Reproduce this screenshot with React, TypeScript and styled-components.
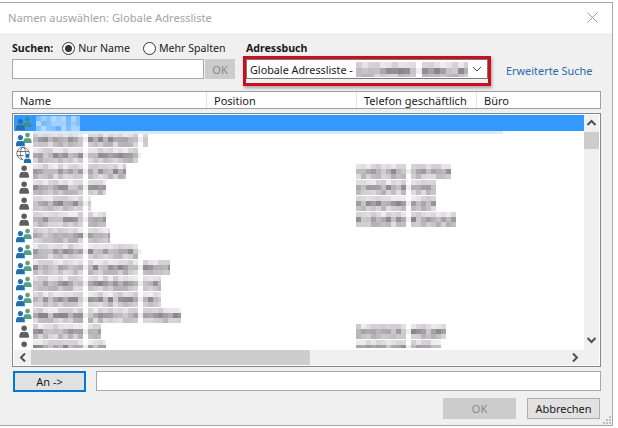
import React from "react";
import styled, { createGlobalStyle } from "styled-components";

const GlobalStyle = createGlobalStyle`
  html, body { margin: 0; padding: 0; background: #fff; }
  body { font-family: "Noto Sans", "Open Sans", sans-serif; font-size: 11px; color: #1a1a1a; overflow: hidden; }
`;

const Dialog = styled.div`
  width: 613px;
  height: 424px;
  margin-top: 2px;
  box-sizing: border-box;
  border-top: 1px solid #a8a8a8;
  border-right: 1px solid #a8a8a8;
  border-bottom: 1px solid #a8a8a8;
  background: #f0f0f0;
  display: flex;
  flex-direction: column;
`;

const TitleBar = styled.div`
  height: 30px;
  flex: none;
  box-sizing: border-box;
  background: #fff;
  padding: 0 14px 2px 8px;
  display: flex;
  align-items: center;
  justify-content: space-between;
  color: #a3a3a3;
  font-size: 11.2px;
`;

const Content = styled.div`
  flex: 1;
  position: relative;
  padding: 7px 11px 0 12px;
  display: flex;
  flex-direction: column;
`;

const SearchGrid = styled.div`
  display: grid;
  grid-template-columns: 231px 1fr;
  column-gap: 0;
  height: 51px;
`;

const OptionRow = styled.div`
  display: flex;
  align-items: center;
  height: 16px;
  margin-bottom: 3px;
`;

const BoldLabel = styled.span`
  font-weight: 700;
  font-size: 10.6px;
`;

const RadioLabel = styled.label<{ $gap: number }>`
  display: inline-flex;
  align-items: center;
  gap: 3px;
  margin-left: ${(p) => p.$gap}px;
  font-size: 10.6px;
`;

const RadioCircle = styled.span<{ $on?: boolean }>`
  width: 13px;
  height: 13px;
  box-sizing: border-box;
  border-radius: 50%;
  border: 1px solid #333;
  background: #fff;
  display: flex;
  align-items: center;
  justify-content: center;
  &::after {
    content: "";
    width: 7px;
    height: 7px;
    border-radius: 50%;
    background: ${(p) => (p.$on ? "#333" : "transparent")};
  }
`;

const SearchRow = styled.div`
  display: flex;
  gap: 1px;
`;

const TextInput = styled.div<{ $w: number }>`
  width: ${(p) => p.$w}px;
  height: 20px;
  box-sizing: border-box;
  background: #fff;
  border: 1px solid #a8a8a8;
`;

const DisabledButton = styled.div<{ $w: number; $h: number }>`
  width: ${(p) => p.$w}px;
  height: ${(p) => p.$h}px;
  background: #cccccc;
  color: #8a8a8a;
  display: flex;
  align-items: center;
  justify-content: center;
  font-size: 11px;
`;

const RightColumn = styled.div`
  padding-left: 3px;
`;

const ComboLine = styled.div`
  display: flex;
  align-items: flex-start;
  margin-top: -3px;
  margin-left: -3px;
`;

const ComboFrame = styled.div`
  width: 248px;
  height: 30px;
  box-sizing: border-box;
  border: 3px solid #c80f22;
  box-shadow: 1px 2px 3px rgba(90, 60, 60, 0.45);
`;

const Combo = styled.div`
  height: 20px;
  box-sizing: border-box;
  background: #fff;
  border: 1px solid #7a7a7a;
  display: flex;
  align-items: center;
  padding: 0 5px 0 3px;
  font-size: 10.8px;
  white-space: nowrap;
`;

const ComboArrow = styled.svg`
  margin-left: auto;
  flex: none;
`;

const AdvancedLink = styled.a`
  margin-left: 15px;
  margin-top: 7px;
  color: #2a6aa8;
  font-size: 10.9px;
  white-space: nowrap;
`;

const HeaderBar = styled.div`
  height: 18px;
  width: 589px;
  flex: none;
  box-sizing: border-box;
  background: #fff;
  border: 1px solid #a0a0a0;
  display: grid;
  grid-template-columns: 194px 150px 120px 1fr;
  font-size: 11px;
`;

const HeaderCell = styled.div`
  padding-left: 7px;
  border-right: 1px solid #e3e3e3;
  display: flex;
  align-items: center;
  &:last-child { border-right: 0; }
`;

const ListFrame = styled.div`
  width: 589px;
  height: 254px;
  margin-top: 4px;
  flex: none;
  box-sizing: border-box;
  background: #fff;
  border: 1px solid #828790;
  padding: 1px;
  display: grid;
  grid-template-columns: 1fr 15px;
  grid-template-rows: 233px 17px;
`;

const Rows = styled.div`
  overflow: hidden;
  position: relative;
`;

const RowLine = styled.div<{ $selected?: boolean }>`
  height: 16px;
  position: relative;
  display: grid;
  grid-template-columns: 19px 323px 1fr;
  align-items: center;
  background: ${(p) => (p.$selected ? "#3399ff" : "transparent")};
`;

const IconCell = styled.div`
  padding-left: 2px;
  display: flex;
  align-items: center;
`;

const NameCell = styled.div<{ $offset?: number }>`
  padding-left: ${(p) => p.$offset ?? 0}px;
`;

const SelectionBleed = styled.div`
  position: absolute;
  left: 19px;
  top: 0;
  width: 470px;
  height: 3px;
  background: #d9e9f8;
`;

const VBar = styled.div`
  background: #f0f0f0;
  display: flex;
  flex-direction: column;
  align-items: center;
`;

const HBar = styled.div`
  background: #f0f0f0;
  display: flex;
  align-items: center;
  margin-top: 2px;
`;

const ScrollArrow = styled.svg`
  flex: none;
`;

const VThumb = styled.div`
  width: 15px;
  height: 17px;
  margin-top: 1px;
  background: #cdcdcd;
`;

const VSpacer = styled.div`
  flex: 1;
`;

const HThumb = styled.div`
  width: 279px;
  height: 15px;
  background: #cdcdcd;
`;

const Corner = styled.div`
  background: #f0f0f0;
`;

const ToLine = styled.div`
  display: flex;
  margin-top: 4px;
  align-items: flex-start;
`;

const ToButton = styled.div`
  width: 73px;
  height: 21px;
  margin-left: 1px;
  box-sizing: border-box;
  border: 2px solid #0078d7;
  background: #e1e1e1;
  display: flex;
  align-items: center;
  justify-content: center;
  font-size: 11px;
`;

const ToInput = styled(TextInput)`
  margin-left: 10px;
`;

const ButtonLine = styled.div`
  display: flex;
  justify-content: flex-end;
  gap: 11px;
  margin-top: 6px;
  width: 588px;
`;

const PlainButton = styled.div`
  width: 73px;
  height: 21px;
  box-sizing: border-box;
  border: 1px solid #adadad;
  background: #e1e1e1;
  display: flex;
  align-items: center;
  justify-content: center;
  font-size: 11px;
`;

const Grip = styled.svg`
  position: absolute;
  right: 1px;
  bottom: 1px;
`;

const MosaicSvg = styled.svg`
  display: block;
  flex: none;
  margin: -1px 0;
`;

// pixelated redaction, same seed gives same blocks
const Mosaic = ({ width, seed, light, cell = 5 }: { width: number; seed: number; light?: boolean; cell?: number }) => {
  let s = seed * 9301 + 49297;
  const next = () => {
    s = (s * 9301 + 49297) % 233280;
    return s / 233280;
  };
  const rects: React.ReactNode[] = [];
  const cols = Math.ceil(width / cell);
  for (let c = 0; c < cols; c++) {
    const gap = c % 11 === 10;
    for (let r = 0; r < 3; r++) {
      const n = next();
      if (gap && r !== 1) continue;
      const base = r === 1 ? (gap ? 238 : 135 + n * 70) : r === 0 ? 205 + n * 35 : 178 + n * 45;
      const v = Math.round(base);
      const fill = light
        ? `rgba(255,255,255,${(0.25 + n * 0.4).toFixed(2)})`
        : `rgb(${v},${v - 2},${v})`;
      rects.push(<rect key={`${c}-${r}`} x={c * cell} y={r * cell} width={cell} height={cell} fill={fill} />);
    }
  }
  return (
    <MosaicSvg width={width} height={15}>
      {rects}
    </MosaicSvg>
  );
};

const Person = ({ color, x = 0, y = 0, s = 1 }: { color: string; x?: number; y?: number; s?: number }) => (
  <g transform={`translate(${x} ${y}) scale(${s})`} fill={color}>
    <circle cx="8" cy="4.2" r="3.2" />
    <path d="M2.5 15v-2.6c0-2.6 2-4 3.6-4.2 1.2.7 2.6.7 3.8 0 1.6.2 3.6 1.6 3.6 4.2V15z" />
  </g>
);

const RowIcon = ({ kind, selected }: { kind: string; selected?: boolean }) => {
  if (kind === "person") {
    return (
      <svg width="16" height="16" viewBox="0 0 16 16">
        <Person color="#5f5f5f" x={1.2} y={1.7} s={0.87} />
      </svg>
    );
  }
  if (kind === "globe") {
    return (
      <svg width="16" height="16" viewBox="0 0 16 16">
        <g fill="none" stroke="#6a6a6a" strokeWidth="0.9">
          <circle cx="7" cy="6.5" r="6.2" />
          <ellipse cx="7" cy="6.5" rx="2.6" ry="6.2" />
          <path d="M1 4.5h12M1 8.5h12" />
        </g>
        <circle cx="11.5" cy="11.5" r="4.6" fill="#fff" />
        <Person color="#1f6fb2" x={6.2} y={6.2} s={0.66} />
      </svg>
    );
  }
  return (
    <svg width="16" height="16" viewBox="0 0 16 16">
      <Person color={selected ? "#3d8f8f" : "#5a9e86"} x={5.6} y={1} s={0.74} />
      <Person color={selected ? "#2a6fa8" : "#1f6fb2"} x={-2} y={3.2} s={0.8} />
    </svg>
  );
};

const people = [
  { kind: "group", name: 44, selected: true, nameOffset: 3 },
  { kind: "group", name: 115, bleed: true },
  { kind: "globe", name: 108 },
  { kind: "person", name: 93, phone: 95 },
  { kind: "person", name: 73, phone: 80 },
  { kind: "person", name: 58, phone: 80 },
  { kind: "person", name: 73, phone: 100 },
  { kind: "group", name: 77 },
  { kind: "group", name: 108 },
  { kind: "group", name: 137 },
  { kind: "group", name: 128 },
  { kind: "group", name: 128 },
  { kind: "group", name: 148 },
  { kind: "person", name: 68, phone: 90 },
  { kind: "person", name: 73, phone: 85 },
];

const App = () => {
  return (
    <>
      <GlobalStyle />
      <Dialog>
        <TitleBar>
          <span>Namen auswählen: Globale Adressliste</span>
          <svg width="11" height="11" viewBox="0 0 11 11">
            <path d="M.5.5l10 10M10.5.5l-10 10" stroke="#9a9a9a" strokeWidth="1" fill="none" />
          </svg>
        </TitleBar>
        <Content>
          <SearchGrid>
            <div>
              <OptionRow>
                <BoldLabel>Suchen:</BoldLabel>
                <RadioLabel $gap={9}>
                  <RadioCircle $on />
                  Nur Name
                </RadioLabel>
                <RadioLabel $gap={13}>
                  <RadioCircle />
                  Mehr Spalten
                </RadioLabel>
              </OptionRow>
              <SearchRow>
                <TextInput $w={192} />
                <DisabledButton $w={30} $h={20}>OK</DisabledButton>
              </SearchRow>
            </div>
            <RightColumn>
              <OptionRow>
                <BoldLabel>Adressbuch</BoldLabel>
              </OptionRow>
              <ComboLine>
                <ComboFrame>
                  <Combo>
                    Globale Adressliste -&nbsp;
                    <Mosaic width={112} seed={77} cell={6} />
                    <ComboArrow width="10" height="6" viewBox="0 0 10 6">
                      <path d="M1 1l4 4 4-4" stroke="#444" fill="none" />
                    </ComboArrow>
                  </Combo>
                </ComboFrame>
                <AdvancedLink>Erweiterte Suche</AdvancedLink>
              </ComboLine>
            </RightColumn>
          </SearchGrid>
          <HeaderBar>
            <HeaderCell>Name</HeaderCell>
            <HeaderCell>Position</HeaderCell>
            <HeaderCell>Telefon geschäftlich</HeaderCell>
            <HeaderCell>Büro</HeaderCell>
          </HeaderBar>
          <ListFrame>
            <Rows>
              {people.map((item, i) => (
                <RowLine key={i} $selected={item.selected}>
                  {item.bleed && <SelectionBleed />}
                  <IconCell>
                    <RowIcon kind={item.kind} selected={item.selected} />
                  </IconCell>
                  <NameCell $offset={item.nameOffset}>
                    <Mosaic width={item.name} seed={i + 3} light={item.selected} />
                  </NameCell>
                  <div>{item.phone && <Mosaic width={item.phone} seed={i + 40} />}</div>
                </RowLine>
              ))}
            </Rows>
            <VBar>
              <ScrollArrow width="15" height="16" viewBox="0 0 15 16">
                <path d="M3.5 10l4-4 4 4" stroke="#505050" strokeWidth="2" fill="none" />
              </ScrollArrow>
              <VThumb />
              <VSpacer />
              <ScrollArrow width="15" height="16" viewBox="0 0 15 16">
                <path d="M3.5 6l4 4 4-4" stroke="#505050" strokeWidth="2" fill="none" />
              </ScrollArrow>
            </VBar>
            <HBar>
              <ScrollArrow width="17" height="15" viewBox="0 0 17 15">
                <path d="M11 3.5l-4 4 4 4" stroke="#505050" strokeWidth="2" fill="none" />
              </ScrollArrow>
              <HThumb />
              <VSpacer />
              <ScrollArrow width="17" height="15" viewBox="0 0 17 15">
                <path d="M6 3.5l4 4-4 4" stroke="#505050" strokeWidth="2" fill="none" />
              </ScrollArrow>
            </HBar>
            <Corner />
          </ListFrame>
          <ToLine>
            <ToButton>An -&gt;</ToButton>
            <ToInput $w={505} />
          </ToLine>
          <ButtonLine>
            <DisabledButton $w={73} $h={21}>OK</DisabledButton>
            <PlainButton>Abbrechen</PlainButton>
          </ButtonLine>
          <Grip width="8" height="8" viewBox="0 0 8 8">
            <g fill="#c0c0c0">
              <rect x="6" y="0" width="2" height="2" />
              <rect x="3" y="3" width="2" height="2" />
              <rect x="6" y="3" width="2" height="2" />
              <rect x="0" y="6" width="2" height="2" />
              <rect x="3" y="6" width="2" height="2" />
              <rect x="6" y="6" width="2" height="2" />
            </g>
          </Grip>
        </Content>
      </Dialog>
    </>
  );
};

export default App;
